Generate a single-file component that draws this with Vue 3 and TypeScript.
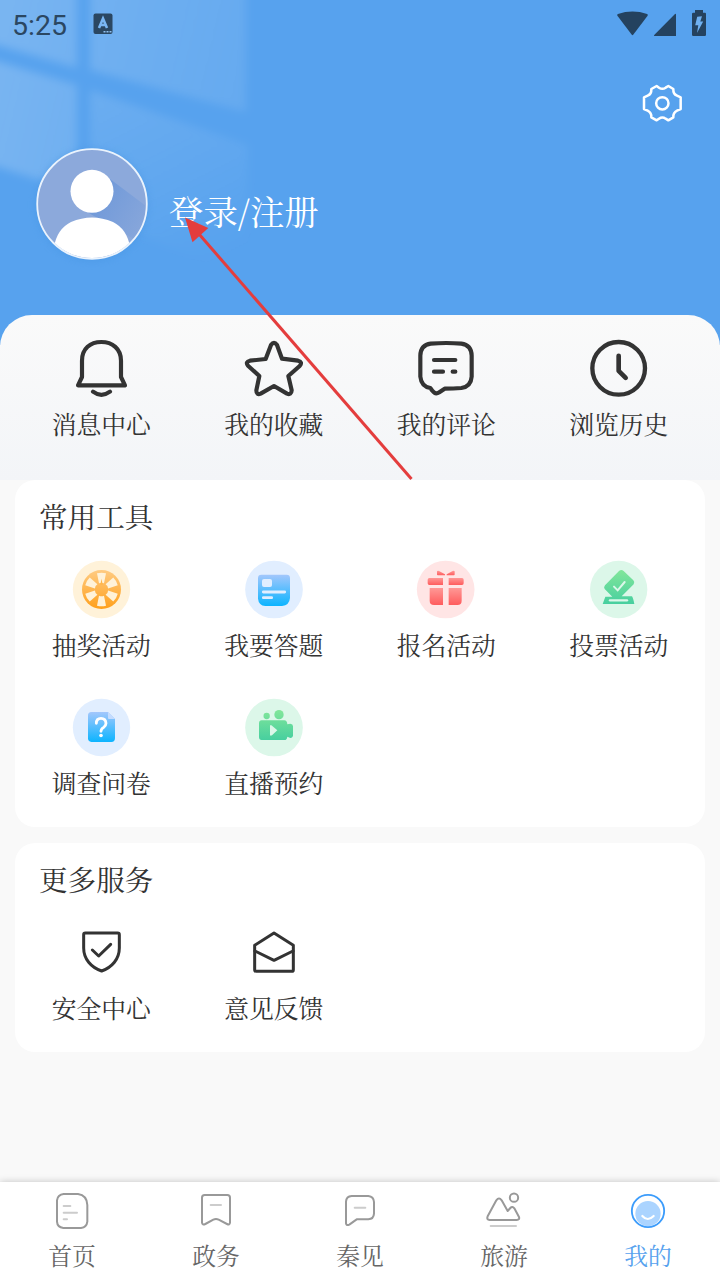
<script setup lang="ts">
interface Entry {
  id: string
  label: string
}

const shortcuts: Entry[] = [
  { id: 'bell', label: '消息中心' },
  { id: 'star', label: '我的收藏' },
  { id: 'comment', label: '我的评论' },
  { id: 'history', label: '浏览历史' },
]

const tools: Entry[] = [
  { id: 'wheel', label: '抽奖活动' },
  { id: 'quiz', label: '我要答题' },
  { id: 'gift', label: '报名活动' },
  { id: 'vote', label: '投票活动' },
  { id: 'survey', label: '调查问卷' },
  { id: 'live', label: '直播预约' },
]

const services: Entry[] = [
  { id: 'shield', label: '安全中心' },
  { id: 'mail', label: '意见反馈' },
]

const tabs: Entry[] = [
  { id: 'home', label: '首页' },
  { id: 'gov', label: '政务' },
  { id: 'news', label: '秦见' },
  { id: 'travel', label: '旅游' },
  { id: 'mine', label: '我的' },
]

// Angles of the openings in the prize wheel
const wedges: number[] = [0, 60, 120, 180, 240, 300]
</script>

<template>
  <div class="screen">
    <header class="hero">
      <svg class="panes" width="300" height="315" viewBox="0 0 300 315" aria-hidden="true">
        <defs>
          <linearGradient id="pane" gradientUnits="userSpaceOnUse" x1="0" y1="60" x2="262" y2="120">
            <stop offset="0" stop-color="#fff" stop-opacity=".2" />
            <stop offset=".5" stop-color="#fff" stop-opacity=".13" />
            <stop offset="1" stop-color="#fff" stop-opacity=".08" />
          </linearGradient>
          <linearGradient id="paneLow" gradientUnits="userSpaceOnUse" x1="110" y1="90" x2="200" y2="270">
            <stop offset="0" stop-color="#fff" stop-opacity=".12" />
            <stop offset="1" stop-color="#fff" stop-opacity="0" />
          </linearGradient>
          <filter id="soft" x="-20%" y="-20%" width="140%" height="140%">
            <feGaussianBlur stdDeviation="4.5" />
          </filter>
        </defs>
        <g filter="url(#soft)">
          <path fill="url(#pane)" d="M-20-20H77V68L-20 40ZM-20 56L77 85V192L-20 161ZM90-20H246V112L90 70Z" />
          <path fill="url(#paneLow)" d="M90 90L248 145V278L90 215Z" />
        </g>
      </svg>

      <div class="status">
        <span class="clock">5:25</span>
        <svg class="ime" width="20" height="22" viewBox="0 0 20 22">
          <rect x=".5" y=".5" width="19" height="20.5" rx="2" fill="#2b4762" />
          <path d="M6 15L10 5.500L14 15M7.200 12H12.800" fill="none" stroke="#7ab6f3" stroke-width="2.600" />
          <path d="M10.500 18.700h2m1 0h2m1 0h2" stroke="#8fc0f0" stroke-width="1.500" />
        </svg>
        <svg class="signals" width="96" height="36" viewBox="0 0 96 36">
          <g fill="#24425f">
            <path d="M1.400 15.800Q.7 14.600 1.900 14Q16.500 9.100 31.100 14Q32.300 14.600 31.600 15.800L17.400 34.600Q16.500 35.700 15.600 34.600Z" />
            <path d="M59.500 13.800Q60 13.800 60 14.800V36H38.600Q37.400 36 38.200 35L58.500 14.400Q59 13.800 59.500 13.800Z" />
            <path d="M79 10H87V12.800H89Q90 12.800 90 14V34.700Q90 36 88.800 36H77.200Q76 36 76 34.700V14Q76 12.800 77.200 12.800H79Z" />
          </g>
          <path d="M81.200 16.700L86 16.200L84.300 21.500H87.200L81 33L82.300 25.300H79.200Z" fill="#6fb0f0" />
        </svg>
      </div>

      <div class="toolbar">
        <svg width="44" height="44" viewBox="12 12 132 132" fill="none" stroke="#fff" stroke-width="7.500" stroke-linejoin="round">
          <path d="M62 24L69 29Q79 36 89 29L97 24L112 33Q111 48 123 53L134 58V93L123 98Q111 104 112 118L97 127L89 122Q79 115 69 122L62 127L46 118Q47 104 35 98L24 93V58L35 53Q47 48 46 33Z" />
          <circle cx="79" cy="76" r="18.500" />
        </svg>
      </div>

      <div class="profile">
        <svg class="avatar" width="120" height="120" viewBox="0 0 120 120">
          <defs>
            <clipPath id="face"><circle cx="60" cy="60" r="54" /></clipPath>
            <linearGradient id="cast" x1="0" y1=".2" x2="1" y2=".8">
              <stop offset="0" stop-color="#6c97d9" />
              <stop offset="1" stop-color="#8ca9db" />
            </linearGradient>
          </defs>
          <circle class="glow" cx="60" cy="61" r="55" fill="#4795e2" />
          <circle cx="60" cy="60" r="55" fill="#8ca9db" />
          <g clip-path="url(#face)">
            <path d="M78 35L122 68V106L82 84L52 66Z" fill="url(#cast)" />
            <circle cx="60" cy="47.300" r="21.500" fill="#fff" />
            <path d="M22 103Q25 85 39 78Q60 69 81 78Q95 85 98 103Q82 118 60 118T22 103Z" fill="#fff" />
          </g>
          <circle cx="60" cy="60" r="54.800" fill="none" stroke="#eaf3fd" stroke-width="1.800" />
        </svg>
        <span class="login">登录/注册</span>
      </div>
    </header>

    <section class="shortcuts">
      <div v-for="s in shortcuts" :key="s.id" class="cell">
        <svg v-if="s.id === 'bell'" class="line" width="64" height="64" viewBox="117 48 192 192">
          <path d="M156 171V122C156 86 181 66 214 66S273 86 273 122V171L285 196H144Z" />
          <path d="M189 215Q214 234 240 215" />
        </svg>
        <svg v-else-if="s.id === 'star'" class="line" width="64" height="64" viewBox="636 48 192 192">
          <path d="M723 75Q732 62 741 75L756 116L804 122Q819 126 809 138L775 168L785 211Q784 226 771 221L732 198L692 221Q679 226 679 211L688 168L654 137Q645 126 660 122L707 117Z" />
        </svg>
        <svg v-else-if="s.id === 'comment'" class="line" width="64" height="64" viewBox="102 48 192 192">
          <path d="M121 107Q122 75 152 71Q200 67 244 71Q274 75 275 107V170Q273 200 244 204Q220 206 194 206L178 217Q166 225 157 212L151 204Q124 200 121 170Z" />
          <path d="M162 120H226M162 155H189M218 155H226" />
        </svg>
        <svg v-else class="line" width="64" height="64" viewBox="621 48.500 192 192">
          <circle cx="716" cy="145.500" r="79" stroke-width="13" />
          <path d="M716 108V153L737 174" stroke-width="14" />
        </svg>
        <span class="label">{{ s.label }}</span>
      </div>
    </section>

    <section class="card tools">
      <h2>常用工具</h2>
      <div class="grid">
        <div v-for="t in tools" :key="t.id" class="cell">
          <svg v-if="t.id === 'wheel'" width="60" height="60" viewBox="153 210 180 180">
            <defs>
              <linearGradient id="orange" x1="0" y1="0" x2="0" y2="1"><stop stop-color="#ffcb82" /><stop offset="1" stop-color="#ffa01c" /></linearGradient>
            </defs>
            <circle cx="244.500" cy="298.500" r="86" fill="#fff2d9" />
            <circle cx="244.500" cy="298.500" r="58.500" fill="url(#orange)" />
            <g fill="#fff2d9">
              <path v-for="a in wedges" :key="a" :transform="`rotate(${a} 244.5 298.5)`" d="M231 250Q244.500 246 258 250L252 280Q244.500 276 237 280Z" />
            </g>
            <path d="M241 284L244.500 266L248 284Z" fill="#ffb64a" />
          </svg>
          <svg v-else-if="t.id === 'quiz'" width="60" height="60" viewBox="672 210 180 180">
            <defs>
              <linearGradient id="blue" x1="0" y1="0" x2="0" y2="1"><stop stop-color="#a3c7fc" /><stop offset="1" stop-color="#0cb4ff" /></linearGradient>
            </defs>
            <circle cx="762" cy="298.500" r="86.500" fill="#e1eeff" />
            <path d="M724 254H800Q810 254 810 264V324Q808 346 786 348H736Q716 346 714 326V264Q714 254 724 254Z" fill="url(#blue)" />
            <rect x="726" y="267" width="30" height="24" rx="6" fill="#e1eeff" />
            <path d="M730 306H794M730 323H755" fill="none" stroke="#e1eeff" stroke-width="8.500" stroke-linecap="round" />
          </svg>
          <svg v-else-if="t.id === 'gift'" width="60" height="60" viewBox="109 60 180 180">
            <defs>
              <linearGradient id="red" x1="0" y1="0" x2="0" y2="1"><stop stop-color="#ff9896" /><stop offset="1" stop-color="#ff5c5d" /></linearGradient>
            </defs>
            <circle cx="198" cy="148.500" r="86.500" fill="#ffe5e5" />
            <g fill="url(#red)">
              <path d="M172 94Q174 91 178 93L196 103V106H175Q171 106 172 101ZM225 94Q223 91 219 93L201 103V106H222Q226 106 225 101Z" />
              <path d="M149 114H190V135H149Q144 135 144 130V119Q144 114 149 114ZM207 114H247Q252 114 252 119V130Q252 135 247 135H207Z" />
              <path d="M150 144H190V195H163Q150 195 150 182ZM207 144H246V182Q246 195 233 195H207Z" />
            </g>
          </svg>
          <svg v-else-if="t.id === 'vote'" width="60" height="60" viewBox="627 60 180 180">
            <defs>
              <linearGradient id="green" gradientUnits="userSpaceOnUse" x1="0" y1="90" x2="0" y2="192"><stop stop-color="#82e69a" /><stop offset="1" stop-color="#47cf9f" /></linearGradient>
            </defs>
            <circle cx="716" cy="148.500" r="86" fill="#dcf7e9" />
            <path d="M717 93Q724 87 731 93L760 121Q766 127 761 133L725 169H756Q760 175 763 192H668L676 170H697L674 147Q670 142 675 136Z" fill="url(#green)" />
            <path d="M702 140L713 151L734 126" fill="none" stroke="#dcf7e9" stroke-width="6" stroke-linecap="round" />
            <path d="M690 181H741" fill="none" stroke="#dcf7e9" stroke-width="7" stroke-linecap="round" />
          </svg>
          <svg v-else-if="t.id === 'survey'" width="60" height="60" viewBox="153 54 180 180">
            <circle cx="244.500" cy="142.500" r="86" fill="#e1eeff" />
            <path d="M214 96H264L285 117V174Q285 186 274 186H214Q204 185 204 175V106Q204 97 214 96Z" fill="url(#blue)" />
            <path d="M264 96L285 117H267Q264 117 264 114Z" fill="#c4dcff" />
            <path d="M229 130Q229 115 243 115T258 130Q258 137 251 142Q243 147 243 154" fill="none" stroke="#fff" stroke-width="8.500" stroke-linecap="round" />
            <circle cx="243" cy="166.500" r="5.500" fill="#fff" />
          </svg>
          <svg v-else width="60" height="60" viewBox="672 54 180 180">
            <defs>
              <linearGradient id="mint" gradientUnits="userSpaceOnUse" x1="0" y1="90" x2="0" y2="180"><stop stop-color="#82e69a" /><stop offset="1" stop-color="#47cf9f" /></linearGradient>
            </defs>
            <circle cx="762" cy="142.500" r="86.500" fill="#dcf7e9" />
            <g fill="url(#mint)">
              <circle cx="740" cy="108" r="9.500" />
              <circle cx="777" cy="104" r="14" />
              <path d="M725 121H793Q801 121 802 133L811 131Q819 132 819 139V168Q817 174 811 174L802 170Q801 180 793 180H725Q717 180 717 171V130Q717 121 725 121Z" />
            </g>
            <path d="M750 137Q752 133 756 137L772 151L756 166Q751 169 750 165Z" fill="#dcf7e9" />
          </svg>
          <span class="label">{{ t.label }}</span>
        </div>
      </div>
    </section>

    <section class="card services">
      <h2>更多服务</h2>
      <div class="grid">
        <div v-for="s in services" :key="s.id" class="cell">
          <svg v-if="s.id === 'shield'" class="line thin" width="48" height="48" viewBox="231 264 144 144">
            <path d="M256 279H353Q358 279 358 284V324C358 357 336 382 305 393C273 382 251 357 251 324V284Q251 279 256 279Z" />
            <path d="M277 330L296 348L332 313" />
          </svg>
          <svg v-else class="line thin" width="48" height="48" viewBox="750 264 144 144">
            <path d="M822 279L880 316V389Q880 394 875 394H769Q764 394 764 389V316Z" />
            <path d="M765 333L822 361L879 333" />
          </svg>
          <span class="label">{{ s.label }}</span>
        </div>
      </div>
    </section>

    <nav class="tabbar">
      <div v-for="t in tabs" :key="t.id" class="tab" :class="{ active: t.id === 'mine' }">
        <svg v-if="t.id === 'home'" class="outline" width="48" height="48" viewBox="144 51 144 144">
          <path d="M191 72H234Q261 76 262 105V155Q260 172 243 174H190Q172 172 171 155V91Q173 74 191 72Z" />
          <path class="faint" d="M191 108H211M191 128H231M191 148H201" />
        </svg>
        <svg v-else-if="t.id === 'gov'" class="outline" width="48" height="48" viewBox="576 51 144 144">
          <path d="M614 75H682Q690 75 690 83V158Q689 166 681 162L656 149Q648 145 640 149L616 162Q607 166 606 158V83Q606 75 614 75Z" />
          <path class="faint" d="M632 105H663" />
        </svg>
        <svg v-else-if="t.id === 'news'" class="outline" width="48" height="48" viewBox="1008 51 144 144">
          <path d="M1055 78H1105Q1121 80 1122 96V131Q1121 147 1105 148H1070L1048 164Q1039 168 1038 160V95Q1039 79 1055 78Z" />
          <path class="faint" d="M1064 113H1096" />
        </svg>
        <svg v-else-if="t.id === 'travel'" class="outline" width="48" height="48" viewBox="240 51 144 144">
          <circle cx="342" cy="83" r="12.500" />
          <path d="M289 91Q297 80 305 91L323 123L331 114Q337 107 343 115L357 141Q360 149 350 150H269Q259 149 263 139Z" />
          <path class="faint" d="M272 168H348" />
        </svg>
        <svg v-else width="48" height="48" viewBox="672 51 144 144">
          <circle cx="744" cy="131" r="38" fill="#abd4ff" />
          <circle cx="744" cy="123" r="48.500" fill="none" stroke="#3c9cfb" stroke-width="5.500" />
          <path d="M727 138Q743 156 761 138" fill="none" stroke="#fff" stroke-width="6.500" stroke-linecap="round" />
        </svg>
        <span class="tab-label">{{ t.label }}</span>
      </div>
    </nav>

    <svg class="pointer" width="240" height="275" viewBox="180 210 240 275" aria-hidden="true">
      <path d="M199 234L411.500 479" stroke="#e43d3d" stroke-width="3" />
      <path d="M185 217.500L208.300 228L192.500 242.300Z" fill="#e43d3d" />
    </svg>
  </div>
</template>

<style>
body {
  margin: 0;
}
</style>

<style scoped>
.screen {
  position: relative;
  display: flex;
  flex-direction: column;
  width: 720px;
  height: 1280px;
  overflow: hidden;
  background: #f9f9f9;
  color: #333;
  font-family: "Noto Serif CJK SC", "Noto Serif SC", "Source Han Serif SC", "Noto Sans CJK SC", serif;
}

svg {
  display: block;
  flex: none;
}

.hero {
  position: relative;
  box-sizing: border-box;
  height: 345px;
  margin-bottom: -30px;
  background: #57a2ee;
}

.panes {
  position: absolute;
  left: 0;
  top: 0;
}

.status {
  position: relative;
  display: flex;
  align-items: flex-start;
  height: 82px;
}

.clock {
  width: 80px;
  padding: 9px 0 0 12px;
  color: #2b4762;
  font: 400 28.500px/34px Roboto, sans-serif;
}

.ime {
  margin-top: 13px;
  margin-left: 1px;
}

.signals {
  margin-left: auto;
  margin-right: 8px;
}

.toolbar {
  position: relative;
  display: flex;
  justify-content: flex-end;
  height: 62px;
  padding-right: 36px;
}

.profile {
  position: relative;
  display: flex;
  align-items: center;
  padding-left: 32px;
}

.avatar {
  overflow: visible;
}

.glow {
  filter: blur(4px);
  opacity: 0.7;
}

.login {
  margin: 11px 0 0 17px;
  color: #fff;
  font-size: 34.400px;
  line-height: 44px;
}

.shortcuts {
  position: relative;
  box-sizing: border-box;
  display: grid;
  grid-template-columns: repeat(4, 1fr);
  height: 165px;
  padding: 21px 15px 0;
  border-radius: 32px 32px 0 0;
  background: linear-gradient(#fafafa, #f3f5f8);
}

.cell {
  display: flex;
  flex-direction: column;
  align-items: center;
}

.line {
  fill: none;
  stroke: #333;
  stroke-width: 12.500;
  stroke-linecap: round;
  stroke-linejoin: round;
}

.thin {
  stroke-width: 9;
}

.label {
  font-size: 24.800px;
  line-height: 36px;
  white-space: nowrap;
}

.shortcuts .label {
  margin-top: 5px;
}

.card {
  box-sizing: border-box;
  margin: 0 15px;
  border-radius: 20px;
  background: #fff;
}

.tools {
  height: 347px;
}

.services {
  height: 209px;
  margin-top: 16px;
}

h2 {
  margin: 0;
  padding: 16px 0 0 24px;
  font-size: 28.600px;
  font-weight: 400;
  line-height: 40px;
}

.grid {
  display: grid;
  grid-template-columns: repeat(4, 1fr);
}

.tools .grid {
  grid-auto-rows: 138px;
  padding-top: 24px;
}

.tools .label {
  margin-top: 6px;
}

.services .grid {
  padding-top: 29px;
}

.services .label {
  margin-top: 13px;
}

.tabbar {
  box-sizing: border-box;
  display: flex;
  height: 98px;
  margin-top: auto;
  padding-top: 5px;
  background: #fff;
  box-shadow: 0 0 7px rgba(0, 0, 0, 0.22);
}

.tab {
  display: flex;
  flex: 1;
  flex-direction: column;
  align-items: center;
  color: #666;
}

.active {
  color: #57a2ee;
}

.outline {
  fill: none;
  stroke: #999;
  stroke-width: 6;
  stroke-linecap: round;
  stroke-linejoin: round;
}

.faint {
  stroke: #ccc;
}

.tab-label {
  margin-top: 3px;
  font-size: 23.800px;
  line-height: 34px;
}

.pointer {
  position: absolute;
  left: 180px;
  top: 210px;
}
</style>
